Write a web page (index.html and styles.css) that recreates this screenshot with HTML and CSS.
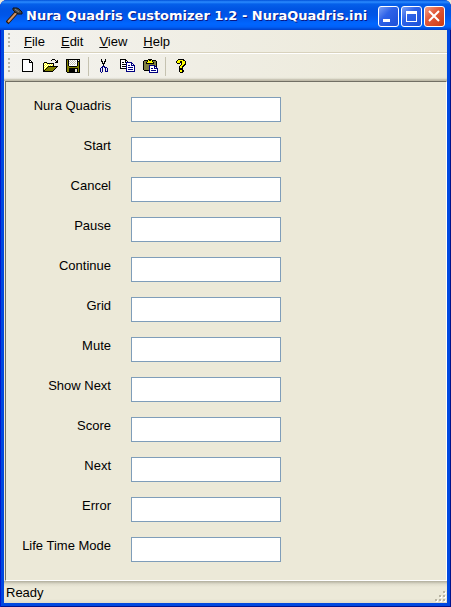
FILE: index.html
```html
<!DOCTYPE html>
<html lang="en">
<head>
  <meta charset="UTF-8" />
  <title>Nura Quadris Customizer 1.2 - NuraQuadris.ini</title>
  <link rel="stylesheet" href="styles.css">
</head>
<body>
  <div class="window">
    <header class="titlebar">
      <svg class="app-icon" width="18" height="18" viewBox="0 0 18 18">
        <path d="M1 16L11 5" stroke="#301808" stroke-width="4"/>
        <path d="M2 15L11 5" stroke="#d09468" stroke-width="2"/>
        <path d="M7 1h4l2 1 3 3v2h-4l-3-2-2-2z" fill="#444" stroke="#111"/>
        <path d="M9 2l4 3" stroke="#888"/>
      </svg>
      <h1>Nura Quadris Customizer 1.2 - NuraQuadris.ini</h1>
      <div class="caption-buttons">
        <button type="button" aria-label="Minimize">
          <svg width="21" height="21" viewBox="0 0 21 21"><path d="M5 13h7v3H5z" fill="#fff"/></svg>
        </button>
        <button type="button" aria-label="Maximize">
          <svg width="21" height="21" viewBox="0 0 21 21"><path d="M5 5h11v11H5zM6 8v7h9V8z" fill="#fff" fill-rule="evenodd"/></svg>
        </button>
        <button type="button" class="close" aria-label="Close">
          <svg width="21" height="21" viewBox="0 0 21 21"><path d="M5 5l10 10M15 5L5 15" stroke="#fff" stroke-width="2"/></svg>
        </button>
      </div>
    </header>

    <div class="client">
      <nav class="menubar">
        <span class="grip"></span>
        <a href="#"><u>F</u>ile</a>
        <a href="#"><u>E</u>dit</a>
        <a href="#"><u>V</u>iew</a>
        <a href="#"><u>H</u>elp</a>
      </nav>

      <div class="toolbar">
        <span class="grip"></span>
        <button type="button" aria-label="New">
          <svg width="16" height="16" viewBox="0 0 16 16" shape-rendering="crispEdges">
            <path d="M2 1h8v1h1v1h1v1h1v10H2z"/>
            <path d="M3 2h6v3h3v8H3zM10 3h1v1h-1z" fill="#fff"/>
          </svg>
        </button>
        <button type="button" aria-label="Open">
          <svg width="16" height="16" viewBox="0 0 16 16" shape-rendering="crispEdges">
            <path d="M0 5h1V4h3v1h7v3h4v1h-1v1h-1v1h-1v1h-1v1h-1v1H0z"/>
            <path d="M1 5h3v1h6v2H5v1H4v1H3v1H2v1H1z" fill="#ff0"/>
            <path d="M2 5h1v1H2zM1 6h1v1H1zM3 6h1v1H3zM5 6h1v1H5zM7 6h1v1H7zM9 6h1v1H9zM2 7h1v1H2zM4 7h1v1H4zM6 7h1v1H6zM8 7h1v1H8zM1 8h1v1H1zM3 8h1v1H3zM2 9h1v1H2zM1 10h1v1H1z" fill="#fff"/>
            <path d="M5 9h8v1h-1v1h-1v1h-1v1H2v-1h1v-1h1v-1h1z" fill="#808000"/>
            <path d="M9 1h3v1H9zM8 2h1v1H8zM12 2h1v1h-1zM14 2h1v3h-3V4h1V3h1z"/>
          </svg>
        </button>
        <button type="button" aria-label="Save">
          <svg width="16" height="16" viewBox="0 0 16 16" shape-rendering="crispEdges">
            <path d="M0 1h14v14H1v-1H0z"/>
            <path d="M1 2h1v6h1v1h8V8h1V4h1v10H1z" fill="#808000"/>
            <path d="M3 2h8v6H3z" fill="#fff"/>
            <path d="M12 2h1v1h-1z" fill="#fff"/>
            <path d="M3 10h9v4H3z"/>
            <path d="M9 11h2v3H9z" fill="#e4e0d8"/>
            <path d="M4 2h1v1H4zM6 2h1v1H6zM8 2h1v1H8zM3 3h1v1H3zM5 3h1v1H5zM7 3h1v1H7zM9 3h1v1H9zM4 4h1v1H4zM6 4h1v1H6zM8 4h1v1H8zM3 5h1v1H3zM5 5h1v1H5zM7 5h1v1H7zM9 5h1v1H9zM4 6h1v1H4zM6 6h1v1H6zM8 6h1v1H8z" fill="#c4c0b4"/>
          </svg>
        </button>
        <span class="separator"></span>
        <button type="button" aria-label="Cut">
          <svg width="16" height="16" viewBox="0 0 16 16" shape-rendering="crispEdges">
            <path d="M4 1h1v3H4zM8 1h1v3H8zM5 3h1v3H5zM7 3h1v3H7zM6 5h1v3H6z"/>
            <path d="M5 8h3v1H5zM5 9h1v1H5zM7 9h1v1H7zM4 9h1v1H4zM3 10h1v4H3zM4 14h1v1H4zM5 10h1v4H5zM8 9h2v1H8zM8 10h1v4H8zM10 10h1v4h-1zM9 13h1v1H9z" fill="#000080"/>
          </svg>
        </button>
        <button type="button" aria-label="Copy">
          <svg width="16" height="16" viewBox="0 0 16 16" shape-rendering="crispEdges">
            <path d="M0 1h6v1h1v1h1v1h1v7H0z"/>
            <path d="M1 2h4v3h3v5H1zM6 3h1v1H6z" fill="#fff"/>
            <path d="M2 4h2v1H2zM2 6h4v1H2zM2 8h4v1H2z"/>
            <path d="M6 4h6v1h1v1h1v1h1v7H6z" fill="#000080"/>
            <path d="M7 5h4v3h3v5H7zM12 6h1v1h-1z" fill="#fff"/>
            <path d="M8 7h2v1H8zM8 9h5v1H8zM8 11h5v1H8z" fill="#000080"/>
          </svg>
        </button>
        <button type="button" aria-label="Paste">
          <svg width="16" height="16" viewBox="0 0 16 16" shape-rendering="crispEdges">
            <path d="M1 2h4V1h4v1h4v1h1v10H1v-1H0V3h1z"/>
            <path d="M1 3h12v9H1z" fill="#808040"/>
            <path d="M3 4h1V3h6v1h1v2H3z"/>
            <path d="M4 4h6v1H4zM5 2h4v2H5z" fill="#ff0"/>
            <path d="M6 2h2v1H6z"/>
            <path d="M6 7h6v1h1v1h1v1h1v5H6z" fill="#000080"/>
            <path d="M7 8h4v3h3v3H7zM12 9h1v1h-1z" fill="#fff"/>
            <path d="M8 10h2v1H8zM8 12h5v1H8z" fill="#000080"/>
          </svg>
        </button>
        <span class="separator"></span>
        <button type="button" aria-label="About">
          <svg width="16" height="16" viewBox="0 0 16 16" shape-rendering="crispEdges">
            <path d="M4 1h6v1h1v1h1v4h-1v1h-1v1H9v2H5V8h1V7h1V5H6v1H3V5H2V3h1V2h1zM5 11h4v1h1v2H9v1H6v-1H5z"/>
            <path d="M4 2h5v1h2v3h-1v1H9v1H8v2H6V8h1V7h1V3H6v2H3V3h1zM6 12h2v2H6z" fill="#ff0"/>
          </svg>
        </button>
      </div>

      <main>
        <form class="fields">
          <label for="title">Nura Quadris</label><input type="text" id="title">
          <label for="start">Start</label><input type="text" id="start">
          <label for="cancel">Cancel</label><input type="text" id="cancel">
          <label for="pause">Pause</label><input type="text" id="pause">
          <label for="continue">Continue</label><input type="text" id="continue">
          <label for="grid">Grid</label><input type="text" id="grid">
          <label for="mute">Mute</label><input type="text" id="mute">
          <label for="shownext">Show Next</label><input type="text" id="shownext">
          <label for="score">Score</label><input type="text" id="score">
          <label for="next">Next</label><input type="text" id="next">
          <label for="error">Error</label><input type="text" id="error">
          <label for="lifetime">Life Time Mode</label><input type="text" id="lifetime">
        </form>
      </main>

      <footer class="statusbar">
        <span>Ready</span>
        <svg width="12" height="12" viewBox="0 0 12 12" shape-rendering="crispEdges">
          <path d="M9 1h2v2H9zM5 5h2v2H5zM9 5h2v2H9zM1 9h2v2H1zM5 9h2v2H5zM9 9h2v2H9z" fill="#fff"/>
          <path d="M8 0h2v2H8zM4 4h2v2H4zM8 4h2v2H8zM0 8h2v2H0zM4 8h2v2H4zM8 8h2v2H8z" fill="#b8b4a2"/>
        </svg>
      </footer>
    </div>
  </div>
</body>
</html>
```

FILE: styles.css
```css
* {
  box-sizing: border-box;
}
body {
  margin: 0;
  background: #ece9d8;
  font-family: "Liberation Sans", Arial, sans-serif;
  font-size: 13px;
  color: #000;
}
.window {
  display: flex;
  flex-direction: column;
  min-height: 100vh;
  background: #0048e0;
  border-radius: 7px 7px 0 0;
  box-shadow: inset 1px 0 #0019cf, inset -1px -1px #00138c;
}
.titlebar {
  display: flex;
  align-items: center;
  height: 30px;
  padding: 2px 6px 0 6px;
  border-radius: 7px 7px 0 0;
  background: linear-gradient(#0050d8 0, #2b8bff 2px, #0560ea 4px, #0054e3 9px, #0055e8 15px, #0066ff 24px, #0060f8 27px, #0040c8 30px);
}
.app-icon {
  margin-right: 2px;
}
h1 {
  flex: 1;
  margin: 0;
  font-family: "DejaVu Sans", sans-serif;
  font-size: 13px;
  line-height: 20px;
  color: #fff;
  text-shadow: 1px 1px #0a1883;
  white-space: nowrap;
}
.caption-buttons {
  display: flex;
  gap: 2px;
}
.caption-buttons button {
  width: 21px;
  height: 21px;
  padding: 0;
  border: 1px solid #fff;
  border-radius: 3px;
  background: linear-gradient(135deg, #7ba0f5, #2e62e8 40%, #1c50d8);
}
.caption-buttons svg {
  display: block;
  margin: -1px;
}
.caption-buttons .close {
  background: linear-gradient(135deg, #f0a088, #e2593a 40%, #cc3a12);
}
.client {
  flex: 1;
  display: flex;
  flex-direction: column;
  margin: 0 4px 4px;
  background: #ece9d8;
}
.menubar,
.toolbar {
  display: flex;
  align-items: center;
  padding-left: 4px;
  background: linear-gradient(90deg, #f3f2ee, #ece9d8);
}
.menubar {
  height: 23px;
  border-bottom: 1px solid #d8d2bd;
}
.grip {
  width: 2px;
  height: 16px;
  margin-right: 6px;
  background: repeating-linear-gradient(#b8b5a8 0, #b8b5a8 2px, transparent 2px, transparent 4px);
}
.menubar a {
  padding: 0 8px;
  color: #000;
  text-decoration: none;
}
.toolbar {
  height: 28px;
  padding-bottom: 3px;
  border-top: 1px solid #fff;
  box-shadow: inset 0 -3px 2px -1px #bdb9a7;
}
.toolbar button {
  width: 23px;
  height: 22px;
  padding: 0 3px 0 4px;
  border: 0;
  background: none;
}
.toolbar svg {
  display: block;
}
.separator {
  width: 1px;
  height: 19px;
  margin: 0 4px 0 3px;
  background: #c5c2b0;
}
main {
  flex: 1;
  padding: 15px 0 17px;
  border: 1px solid #fff;
  border-top-color: #716f64;
  border-left-color: #716f64;
  margin-left: 1px;
}
.fields {
  display: grid;
  grid-template-columns: 105px 150px;
  column-gap: 20px;
  row-gap: 15px;
}
.fields label {
  line-height: 17px;
  text-align: right;
}
.fields input {
  width: 100%;
  height: 25px;
  border: 1px solid #7f9db9;
  background: #fff;
}
.statusbar {
  display: flex;
  align-items: center;
  justify-content: space-between;
  height: 22px;
  padding-left: 2px;
  background: linear-gradient(#b0ad9c, #dfdccb 3px, #ece9d8 6px, #ece9d8 18px, #dedbc8);
}
.statusbar svg {
  align-self: flex-end;
}
```
